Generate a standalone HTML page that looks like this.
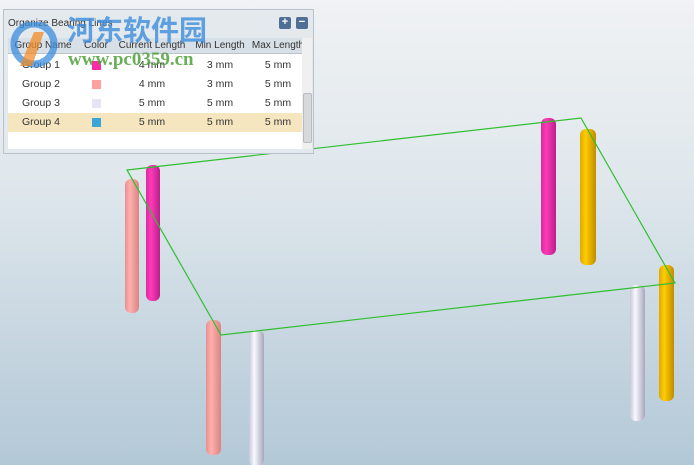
<!DOCTYPE html>
<html><head><meta charset="utf-8"><style>
body{margin:0;width:694px;height:465px;overflow:hidden;font-family:"Liberation Sans","Noto Sans CJK SC",sans-serif;background:linear-gradient(#f0f2f4 0%,#dfe7ec 40%,#b3c8d7 100%);position:relative}
svg{position:absolute;left:0;top:0}
.panel{position:absolute;left:3px;top:9px;width:311px;height:145px;background:#e4e9ee;border:1px solid #b8c2cc;box-sizing:border-box}
.title{position:absolute;left:4px;top:8px;font-size:10px;color:#333}
.btn{position:absolute;top:7px;width:12px;height:12px;background:#4f6f95;border-radius:2px;color:#fff;font-size:11px;line-height:11px;text-align:center;font-weight:bold}
.grid{position:absolute;left:4px;top:28px;width:304px;height:111px;background:#fff}
.hdr{position:absolute;left:0;top:0;height:15px;width:294px;background:#d7dfe7;border-bottom:1px solid #b9c4ce}
.hdr span,.row span{position:absolute;top:0;font-size:10px;color:#333;text-align:center;line-height:15px}
.row{position:absolute;left:0;width:294px;height:19px}
.row span{line-height:19px;font-size:10.5px}
.sw{position:absolute;top:5px;width:9px;height:9px}
.sb{position:absolute;right:0;top:0;width:10px;height:111px;background:#f0f0f0}
.thumb{position:absolute;left:1px;top:55px;width:7px;height:48px;background:#d6d9dc;border:1px solid #b8bcc0;border-radius:2px}
.wm{position:absolute;left:63px;top:3px;font-size:28px;font-weight:bold;color:rgba(60,140,220,.8);font-family:"Noto Sans CJK SC",sans-serif;letter-spacing:0;z-index:5;line-height:32px}
.wm2{position:absolute;left:64px;top:39px;font-size:19px;font-weight:bold;color:rgba(80,160,60,.85);font-family:"Liberation Serif",serif;z-index:5}
.logo{position:absolute;left:6px;top:12px;width:50px;height:48px;z-index:5}
</style></head><body>
<svg width="694" height="465">
<defs>
<linearGradient id="pk" x1="0" x2="1"><stop offset="0" stop-color="#e88f8f"/><stop offset=".35" stop-color="#ffb0ad"/><stop offset="1" stop-color="#d98482"/></linearGradient>
<linearGradient id="mg" x1="0" x2="1"><stop offset="0" stop-color="#d82a9e"/><stop offset=".35" stop-color="#ff3ab8"/><stop offset="1" stop-color="#b8208a"/></linearGradient>
<linearGradient id="wh" x1="0" x2="1"><stop offset="0" stop-color="#c8c8d8"/><stop offset=".35" stop-color="#f8f8ff"/><stop offset="1" stop-color="#a8a8bc"/></linearGradient>
<linearGradient id="yl" x1="0" x2="1"><stop offset="0" stop-color="#e0a800"/><stop offset=".35" stop-color="#ffcc00"/><stop offset="1" stop-color="#c08c00"/></linearGradient>
</defs>
<g>
<rect x="125" y="179" width="14" height="134" rx="6" fill="url(#pk)"/>
<rect x="146" y="165" width="14" height="136" rx="6" fill="url(#mg)"/>
<rect x="206" y="320" width="15" height="135" rx="6" fill="url(#pk)"/>
<rect x="249" y="330" width="15" height="136" rx="6" fill="url(#wh)"/>
<rect x="541" y="118" width="15" height="137" rx="6" fill="url(#mg)"/>
<rect x="580" y="129" width="16" height="136" rx="6" fill="url(#yl)"/>
<rect x="630" y="285" width="15" height="136" rx="6" fill="url(#wh)"/>
<rect x="659" y="265" width="15" height="136" rx="6" fill="url(#yl)"/>
</g>
<polygon points="127,170 581,118 675,283 221,335" fill="none" stroke="#2fbf2f" stroke-width="1.2"/>
</svg>
<div class="panel">
<div class="title">Organize Bearing Lines</div>
<div class="btn" style="left:275px">+</div><div class="btn" style="left:292px">−</div>
<div class="grid">
<div class="hdr"><span style="left:0;width:70px">Group Name</span><span style="left:70px;width:36px">Color</span><span style="left:106px;width:76px">Current Length</span><span style="left:182px;width:60px">Min Length</span><span style="left:242px;width:56px">Max Length</span></div>
<div class="row" style="top:18px"><span style="left:14px">Group 1</span><div class="sw" style="left:84px;background:#ff2aa8"></div><span style="left:106px;width:76px">4 mm</span><span style="left:182px;width:60px">3 mm</span><span style="left:242px;width:56px">5 mm</span></div>
<div class="row" style="top:37px"><span style="left:14px">Group 2</span><div class="sw" style="left:84px;background:#ffa0a0"></div><span style="left:106px;width:76px">4 mm</span><span style="left:182px;width:60px">3 mm</span><span style="left:242px;width:56px">5 mm</span></div>
<div class="row" style="top:56px"><span style="left:14px">Group 3</span><div class="sw" style="left:84px;background:#e4e4f6"></div><span style="left:106px;width:76px">5 mm</span><span style="left:182px;width:60px">5 mm</span><span style="left:242px;width:56px">5 mm</span></div>
<div class="row" style="top:75px;background:#f6e6c0"><span style="left:14px">Group 4</span><div class="sw" style="left:84px;background:#3aa6d8"></div><span style="left:106px;width:76px">5 mm</span><span style="left:182px;width:60px">5 mm</span><span style="left:242px;width:56px">5 mm</span></div>
<div class="sb"><div class="thumb"></div></div>
</div>
<svg class="logo" viewBox="0 0 50 48"><circle cx="24" cy="22" r="20" fill="none" stroke="rgba(60,140,220,.75)" stroke-width="7"/><path d="M10 44 L24 10 L34 10 L22 44Z" fill="rgba(240,140,40,.75)"/></svg>
<div class="wm">河东软件园</div>
<div class="wm2">www.pc0359.cn</div>
</div>
</body></html>
